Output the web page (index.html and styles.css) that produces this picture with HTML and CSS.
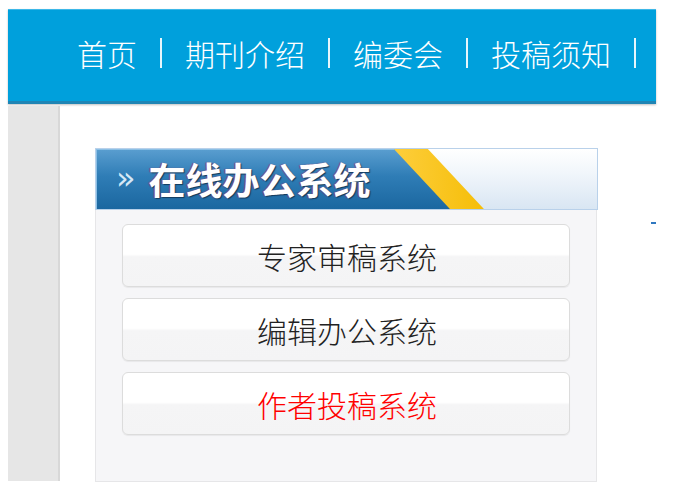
FILE: index.html
```html
<!DOCTYPE html>
<html lang="zh-CN">
<head>
<meta charset="utf-8">
<title>在线办公系统</title>
<link rel="stylesheet" href="styles.css">
</head>
<body>
<div class="page">
  <div class="topbar">
    <nav class="nav">
      <a class="nav-item">首页</a><span class="sep"></span>
      <a class="nav-item">期刊介绍</a><span class="sep"></span>
      <a class="nav-item">编委会</a><span class="sep"></span>
      <a class="nav-item">投稿须知</a><span class="sep"></span>
    </nav>
  </div>
  <div class="content">
    <div class="side"></div>
    <div class="panel">
      <div class="panel-head">
        <span class="arrow">»</span>
        <span class="panel-title">在线办公系统</span>
      </div>
      <div class="panel-body">
        <a class="btn">专家审稿系统</a>
        <a class="btn">编辑办公系统</a>
        <a class="btn btn-red">作者投稿系统</a>
      </div>
    </div>
    <div class="right">
      <span class="dash"></span>
    </div>
  </div>
</div>
</body>
</html>
```

FILE: styles.css
```css
html, body {
  margin: 0;
  padding: 0;
  background: #ffffff;
}
body {
  font-family: "Noto Sans CJK SC", "Noto Sans", sans-serif;
}
.page {
  padding: 9px 0 0 8px;
  width: 648px;
}
.topbar {
  height: 91px;
  background: #00a0dc;
  border-top: 1px solid #3db8e8;
  border-bottom: 3px solid #1f85b5;
  box-shadow: 0 1px 2px rgba(0, 0, 0, 0.25);
  display: flex;
  align-items: center;
}
.nav {
  display: flex;
  align-items: center;
  gap: 23px;
  padding-left: 69px;
  margin-top: -5px;
}
.nav-item {
  color: #ffffff;
  font-size: 30px;
  font-weight: 300;
  line-height: 36px;
}
.sep {
  width: 2px;
  height: 30px;
  background: #e6f6fc;
}
.content {
  display: flex;
  align-items: flex-start;
  margin-top: 2px;
}
.side {
  width: 50px;
  height: 375px;
  background: #e6e6e6;
  border-right: 2px solid #d8d8d8;
}
.panel {
  width: 504px;
  margin-left: 35px;
  margin-top: 42px;
}
.panel-head {
  position: relative;
  height: 60px;
  border: 1px solid #b9d1ea;
  background: linear-gradient(#ffffff, #f1f6fb 40%, #d9e6f3);
  display: flex;
  align-items: center;
  overflow: hidden;
}
.panel-head::before {
  content: "";
  position: absolute;
  left: 0;
  top: 0;
  bottom: 0;
  width: 392px;
  background: linear-gradient(90deg, #f3bf0a, #ffd850 30%, #ffd24a 70%, #f5bd05);
  clip-path: polygon(297px 0, 332px 0, 388px 100%, 352px 100%);
}
.panel-head::after {
  content: "";
  position: absolute;
  left: 0;
  top: 0;
  bottom: 0;
  width: 360px;
  background: linear-gradient(#5a9ed0, #2f7db6 45%, #1b67a0);
  clip-path: polygon(0 0, 298px 0, 354px 100%, 0 100%);
  box-shadow: inset 1px 1px 0 #8cc0e6;
}
.arrow {
  position: relative;
  z-index: 1;
  color: #d5e8f6;
  font-family: "DejaVu Sans", sans-serif;
  font-size: 32px;
  line-height: 30px;
  margin-left: 20px;
  margin-top: -2px;
}
.panel-title {
  position: relative;
  z-index: 1;
  color: #ffffff;
  font-weight: bold;
  font-size: 37px;
  line-height: 44px;
  margin-left: 13px;
  text-shadow: 1px 1px 1px #123a5c, -1px 0 1px #8a3a6a;
}
.panel-body {
  background: #f6f6f8;
  border: 1px solid #e6e6e8;
  border-top: none;
  margin-right: 1px;
  padding: 14px 26px 46px 26px;
  display: flex;
  flex-direction: column;
  gap: 11px;
}
.btn {
  height: 61px;
  border: 1px solid #dcdcdc;
  border-radius: 6px;
  background: linear-gradient(#ffffff 0, #ffffff 48%, #f5f5f6 52%, #f4f4f5 100%);
  box-shadow: 0 1px 1px rgba(0, 0, 0, 0.06);
  display: flex;
  align-items: center;
  justify-content: center;
  color: #222222;
  font-size: 30px;
  font-weight: 300;
  line-height: 36px;
  padding-left: 2px;
}
.btn-red {
  color: #ff0000;
}
.right {
  margin-left: 53px;
  margin-top: 116px;
}
.dash {
  display: block;
  width: 5px;
  height: 2px;
  background: #2f78c0;
}
```
